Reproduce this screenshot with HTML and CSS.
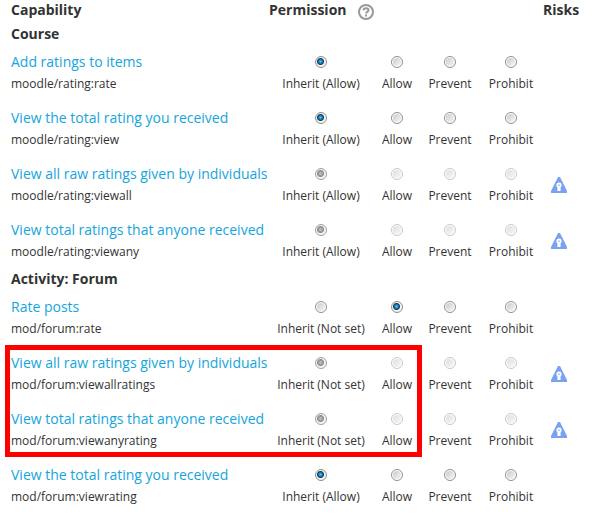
FILE: index.html
```html
<!DOCTYPE html>
<html lang="en">

<head>
    <meta charset="UTF-8">
    <meta name="viewport" content="width=device-width, initial-scale=1.0">
    <title>Permissions</title>
    <link rel="stylesheet" href="styles.css">
</head>

<body>
    <table class="capabilities">
        <colgroup>
            <col>
            <col class="col-inherit">
            <col class="col-allow">
            <col class="col-prevent">
            <col class="col-prohibit">
            <col class="col-risks">
        </colgroup>
        <thead>
            <tr>
                <th scope="col">Capability</th>
                <th scope="col" colspan="4">
                    <div class="heading">
                        Permission
                        <button type="button" class="help" aria-label="Help">
                            <svg width="16" height="16" viewBox="0 0 16 16" fill="none" stroke="#999">
                                <circle cx="8" cy="8" r="7" stroke-width="2"/>
                                <path d="M5.5 6.4C5.6 4.9 6.6 4.2 8 4.2c1.5 0 2.5.8 2.5 2 0 1.6-2.4 1.7-2.4 3.3" stroke-width="2"/>
                                <path d="M7 10.5h2v2H7z" fill="#999" stroke="none"/>
                            </svg>
                        </button>
                    </div>
                </th>
                <th scope="col">Risks</th>
            </tr>
        </thead>
        <tbody id="course">
            <tr class="group"><th colspan="6">Course</th></tr>
        </tbody>
        <tbody id="forum">
            <tr class="group"><th colspan="6">Activity: Forum</th></tr>
        </tbody>
    </table>

    <script>
        // checked: 0 = inherit, 1 = allow, 2 = prevent, 3 = prohibit
        const course = [
            { title: "Add ratings to items", name: "moodle/rating:rate", inherit: "Allow", checked: 0 },
            { title: "View the total rating you received", name: "moodle/rating:view", inherit: "Allow", checked: 0 },
            { title: "View all raw ratings given by individuals", name: "moodle/rating:viewall", inherit: "Allow", checked: 0, locked: true, risk: true },
            { title: "View total ratings that anyone received", name: "moodle/rating:viewany", inherit: "Allow", checked: 0, locked: true, risk: true }
        ];

        const forum = [
            { title: "Rate posts", name: "mod/forum:rate", inherit: "Not set", checked: 1 },
            { title: "View all raw ratings given by individuals", name: "mod/forum:viewallratings", inherit: "Not set", checked: 0, locked: true, risk: true, marked: true },
            { title: "View total ratings that anyone received", name: "mod/forum:viewanyrating", inherit: "Not set", checked: 0, locked: true, risk: true },
            { title: "View the total rating you received", name: "mod/forum:viewrating", inherit: "Allow", checked: 0 }
        ];

        const riskIcon = `
            <a href="#" class="risk" aria-label="Privacy risk">
                <svg width="16" height="16" viewBox="0 0 16 16">
                    <path d="M7 0h2l7 14v2H0v-2z" fill="#7aa1f2"/>
                    <circle cx="8" cy="8" r="2.6" fill="#fff"/>
                    <path d="M6.4 9h3.2v5H6.4z" fill="#fff"/>
                    <circle cx="8" cy="8.3" r=".8" fill="#7aa1f2"/>
                </svg>
            </a>`;

        function renderRows(id, rows) {
            let html = "";
            rows.forEach(row => {
                const options = [`Inherit (${row.inherit})`, "Allow", "Prevent", "Prohibit"];
                const cells = options.map((text, i) => `
                    <td>
                        <label class="option">
                            <input type="radio" name="${row.name}" ${i === row.checked ? "checked" : ""} ${row.locked ? "disabled" : ""}>
                            ${text}
                        </label>
                    </td>`).join("");

                html += `
                    <tr class="capability">
                        <td class="${row.marked ? "marked" : ""}">
                            <a href="#" class="cap-title">${row.title}</a>
                            <div class="cap-name">${row.name}</div>
                        </td>
                        ${cells}
                        <td>${row.risk ? riskIcon : ""}</td>
                    </tr>`;
            });
            document.getElementById(id).insertAdjacentHTML("beforeend", html);
        }

        renderRows("course", course);
        renderRows("forum", forum);
    </script>
</body>

</html>
```
FILE: styles.css
```css
body {
    font-family: "Open Sans", "Noto Sans", sans-serif;
    font-size: 14px;
    line-height: 20px;
    margin: 0;
    padding: 0 11px;
    background-color: #fff;
    color: #333;
}

.capabilities {
    width: 100%;
    table-layout: fixed;
    border-collapse: collapse;
}

.capabilities th,
.capabilities td {
    padding: 0;
    text-align: left;
    white-space: nowrap;
}

.capabilities thead th {
    height: 23px;
    vertical-align: top;
}

.capabilities .group th {
    height: 21px;
}

.col-inherit {
    width: 104px;
}

.col-allow {
    width: 48px;
}

.col-prevent {
    width: 58px;
}

.col-prohibit {
    width: 64px;
}

.col-risks {
    width: 54px;
}

.heading {
    display: flex;
    gap: 11px;
}

.help {
    border: none;
    background: none;
    padding: 4px 0 0;
    height: 20px;
    cursor: pointer;
}

.help svg {
    display: block;
}

.capabilities .capability td {
    padding: 7px 0 5px;
    line-height: 22px;
}

.cap-title {
    display: block;
    color: #14a5dc;
    text-decoration: none;
}

.cap-title:hover {
    text-decoration: underline;
}

.cap-name,
.option {
    font-size: 12px;
}

.option {
    display: flex;
    flex-direction: column;
    align-items: center;
}

.option input {
    appearance: none;
    box-sizing: border-box;
    width: 12px;
    height: 12px;
    margin: 5px 0;
    padding: 1px;
    border: 1px solid #8e8f8f;
    border-radius: 50%;
    background: linear-gradient(135deg, #c6cad0, #f6f6f6) content-box #fff;
}

.option input:checked {
    background: radial-gradient(circle at 45% 45%, #5cc6f2 0, #1476ad 2px, #123a5c 3px, #f4f4f4 4px);
}

.option input:disabled {
    border-color: #c8c8c8;
    background: linear-gradient(135deg, #dedede, #f8f8f8) content-box #fff;
}

.option input:disabled:checked {
    border-color: #a0a0a0;
    background: radial-gradient(circle at 45% 45%, #c0c0c0 0, #a2a2a2 2px, #888 3px, #f4f4f4 4px);
}

.risk {
    display: block;
    padding-left: 8px;
}

.risk svg {
    display: block;
}

/* red frame over the two view ratings rows */
.marked {
    position: relative;
}

.marked::after {
    content: "";
    position: absolute;
    box-sizing: border-box;
    top: 0;
    left: -6px;
    right: -153px;
    height: 200%;
    border: 5px solid #f00;
    pointer-events: none;
}
```
